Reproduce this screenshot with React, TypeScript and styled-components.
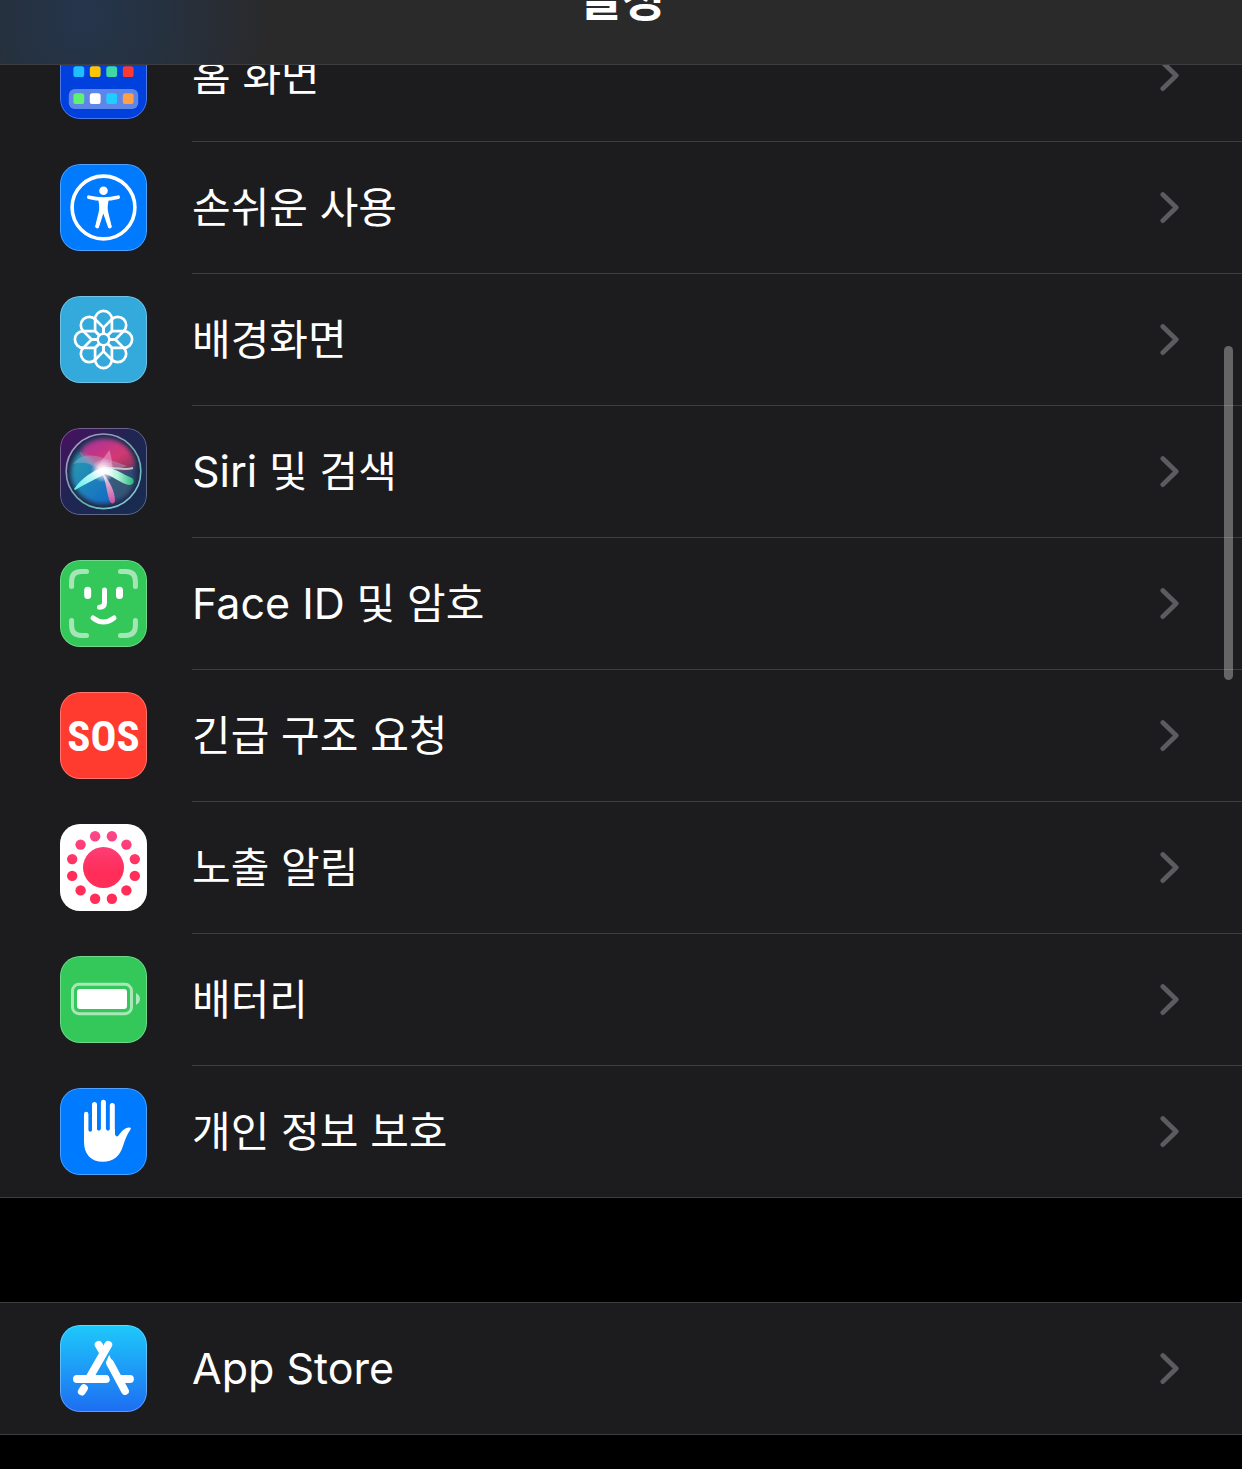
import React from "react";
import styled, { createGlobalStyle } from "styled-components";

const GlobalStyle = createGlobalStyle`
  *, *::before, *::after { box-sizing: border-box; }
  body {
    margin: 0;
    background: #000;
    color: #fff;
    font-family: Inter, "Noto Sans CJK KR", sans-serif;
  }
`;

const Screen = styled.div`
  min-height: 100vh;
  overflow: hidden;
  background: #000;
`;

const NavBar = styled.header`
  position: relative;
  z-index: 2;
  display: flex;
  align-items: center;
  justify-content: center;
  height: 132px;
  margin-top: -67px;
  border-bottom: 1px solid #3d3d40;
  background:
    radial-gradient(ellipse 180px 200px at 85px 85px, #25354c 0%, #26313f 45%, rgba(42, 42, 43, 0) 100%),
    #2a2a2b;
`;

const Title = styled.h1`
  margin: 0;
  font-size: 48px;
  line-height: 64px;
  font-weight: 700;
`;

const Main = styled.main`
  display: flex;
  flex-direction: column;
  gap: 104px;
  margin-top: -56px;
`;

const Group = styled.ul`
  margin: 0;
  padding: 0;
  list-style: none;
  background: #1c1c1e;
  border: solid #3d3d41;
  border-width: 1px 0;
`;

const RowLink = styled.a`
  display: flex;
  align-items: stretch;
  gap: 45px;
  padding-left: 60px;
  color: inherit;
  text-decoration: none;
`;

const IconTile = styled.span<{ $fill: string }>`
  position: relative;
  flex: none;
  align-self: flex-start;
  width: 87px;
  height: 87px;
  margin-top: 22px;
  border-radius: 20px;
  overflow: hidden;
  background: ${(p) => p.$fill};

  svg {
    display: block;
    width: 100%;
    height: 100%;
  }

  &::after {
    content: "";
    position: absolute;
    inset: 0;
    border: 1px solid rgba(255, 255, 255, 0.3);
    border-radius: inherit;
  }
`;

const RowBody = styled.span`
  display: flex;
  flex: 1;
  align-items: center;
  justify-content: space-between;
  min-height: 131px;
  padding-right: 62px;

  li:not(:last-child) > a > & {
    min-height: 132px;
    border-bottom: 1px solid #3d3d41;
  }
`;

const Label = styled.span`
  font-size: 42px;
  line-height: 60px;
`;

const Latin = styled.span`
  font-size: 43px;
`;

const SosText = styled.span`
  display: flex;
  align-items: center;
  justify-content: center;
  height: 100%;
  font-family: "Roboto Condensed", "Liberation Sans Narrow", "Open Sans Condensed", "Noto Sans Condensed", Roboto, sans-serif;
  font-size: 43px;
  line-height: 48px;
  font-weight: 700;
`;

const ScrollThumb = styled.div`
  position: fixed;
  z-index: 3;
  top: 346px;
  right: 9px;
  width: 9px;
  height: 334px;
  border-radius: 5px;
  background: rgba(255, 255, 255, 0.32);
`;

const Chevron = () => (
  <svg width="20" height="32" viewBox="0 0 20 32" fill="none" stroke="#5c5c60" strokeWidth="4.8" strokeLinecap="round" strokeLinejoin="round" aria-hidden="true">
    <path d="M2.8 2.6 16.200 15.500 2.800 28.600" />
  </svg>
);

const Glyph = ({ children }: { children: React.ReactNode }) => (
  <svg viewBox="0 0 87 87" fill="none" aria-hidden="true">{children}</svg>
);

const columns = [13.4, 29.8, 46.3, 62.8];

const HomeGlyph = () => (
  <Glyph>
    {["#ff9f46", "#5ef17c", "#fff", "#1ec8ff"].map((c, i) => (
      <rect key={c} x={columns[i]} y="14" width="10.8" height="10.8" rx="2.6" fill={c} />
    ))}
    {["#1ebeff", "#ffc400", "#3fd8a4", "#f93a33"].map((c, i) => (
      <rect key={c} x={columns[i]} y="34.2" width="10.8" height="10.8" rx="2.6" fill={c} />
    ))}
    <rect x="8.8" y="57" width="69.4" height="20" rx="6" fill="#fff" fillOpacity="0.37" />
    {["#5df272", "#fff", "#1fcdff", "#ff9f46"].map((c, i) => (
      <rect key={c} x={columns[i]} y="61.2" width="10.8" height="10.8" rx="2.6" fill={c} />
    ))}
  </Glyph>
);

const AccessibilityGlyph = () => (
  <Glyph>
    <circle cx="43.5" cy="43.5" r="31.4" stroke="#fff" strokeWidth="3.6" />
    <circle cx="43.5" cy="26.8" r="4.3" fill="#fff" />
    <path d="M28.8 33.2Q36 35 43.5 35T58.2 33.2" stroke="#fff" strokeWidth="3.6" strokeLinecap="round" />
    <path d="M38 34h11c-1 5-1.3 8-1.3 10 0 4 2.5 11 4 19l-3.4 1-5-14.500-4.600 14.500-3.500-1c1.500-8 4-15 4-19 0-2-.2-5-1.200-10z" fill="#fff" />
    <path d="M41.2 49 37 62.8M45.8 49 50 62.8" stroke="#fff" strokeWidth="3.2" strokeLinecap="round" />
  </Glyph>
);

const WallpaperGlyph = () => (
  <Glyph>
    <g transform="translate(43.5 43.5)" stroke="#fff" strokeWidth="2.7" strokeLinejoin="round">
      {[0, 45, 90, 135, 180, 225, 270, 315].map((a) => (
        <path key={a} transform={`rotate(${a})`} d="M-3.5-3.5-8.4-8.4V-20.2A8.4 8.4 0 0 1 8.4-20.2V-8.4L3.5-3.5" />
      ))}
      <circle r="5.8" fill="#34aadc" strokeWidth="2.4" />
    </g>
  </Glyph>
);

const SiriGlyph = () => (
  <Glyph>
    <defs>
      <linearGradient id="siriBg" x1="0" y1="0" x2="1" y2="1">
        <stop offset="0" stopColor="#4a1060" />
        <stop offset="0.45" stopColor="#202552" />
        <stop offset="1" stopColor="#172c50" />
      </linearGradient>
      <radialGradient id="siriOrb">
        <stop offset="0" stopColor="#566a9a" />
        <stop offset="0.75" stopColor="#2b4a74" />
        <stop offset="1" stopColor="#1d2344" />
      </radialGradient>
      <linearGradient id="siriRim" x1="0" y1="0" x2="1" y2="1">
        <stop offset="0" stopColor="#c08ad0" />
        <stop offset="0.6" stopColor="#65b5a5" />
        <stop offset="1" stopColor="#8fd0e8" />
      </linearGradient>
      <linearGradient id="siriPink" x1="0" y1="0" x2="1" y2="1">
        <stop offset="0" stopColor="#a8309e" />
        <stop offset="0.6" stopColor="#d43a72" />
        <stop offset="1" stopColor="#7a3058" />
      </linearGradient>
      <linearGradient id="siriBlue" x1="0" y1="0" x2="1" y2="1">
        <stop offset="0" stopColor="#2a9cae" />
        <stop offset="1" stopColor="#1268c8" />
      </linearGradient>
      <linearGradient id="siriGreen" x1="0" y1="0" x2="1" y2="0">
        <stop offset="0" stopColor="#fff" />
        <stop offset="0.5" stopColor="#b5f5df" />
        <stop offset="1" stopColor="#25b77a" />
      </linearGradient>
      <linearGradient id="siriCyan" x1="1" y1="0" x2="0" y2="1">
        <stop offset="0" stopColor="#fff" />
        <stop offset="1" stopColor="#58eee8" />
      </linearGradient>
      <linearGradient id="siriMagenta" x1="0" y1="0" x2="0" y2="1">
        <stop offset="0" stopColor="#fff" />
        <stop offset="1" stopColor="#f04a9c" />
      </linearGradient>
      <radialGradient id="siriGlow">
        <stop offset="0" stopColor="#fff" />
        <stop offset="0.35" stopColor="#fff" stopOpacity="0.75" />
        <stop offset="1" stopColor="#fff" stopOpacity="0" />
      </radialGradient>
      <filter id="siriSoft" x="-20%" y="-20%" width="140%" height="140%">
        <feGaussianBlur stdDeviation="2" />
      </filter>
      <filter id="siriEdge" x="-20%" y="-20%" width="140%" height="140%">
        <feGaussianBlur stdDeviation="0.5" />
      </filter>
    </defs>
    <rect width="87" height="87" fill="url(#siriBg)" />
    <circle cx="43.5" cy="43.3" r="37.3" fill="url(#siriOrb)" stroke="url(#siriRim)" strokeWidth="1.6" />
    <g filter="url(#siriSoft)">
      <path d="M22 21C32 8 58 8 68 21 75 29 76 37 73 40 62 45 51 39 42 43 31 38 22 32 22 21Z" fill="url(#siriPink)" />
      <path d="M19 25C10 35 9 51 16 60 24 74 43 79 55 72 49 62 49 48 42 43 33 33 26 28 19 25Z" fill="url(#siriBlue)" />
      <path d="M42 43C53 47 65 55 74 49 74 60 66 70 57 72 49 65 49 53 42 43Z" fill="#3a5878" fillOpacity="0.8" />
    </g>
    <g filter="url(#siriEdge)">
      <path d="M13 36C24 22 38 27 67 38 56 43 48 39 42 43 34 36 23 33 13 36Z" fill="#a6b9d8" fillOpacity="0.38" />
      <path d="M49.5 22C44 29 38 38 29 49L43 45 52 42C53 35 51 28 49.5 22Z" fill="#ef9fd4" fillOpacity="0.55" />
      <path d="M20 24C26 34 35 40 43 44" stroke="#db70bd" strokeOpacity="0.5" />
      <path d="M14 61C22 50 33 42 45 39L45 46C35 51 24 57 15 62Z" fill="url(#siriCyan)" />
      <path d="M41 40C53 38 62 46 72 50 75 52 74 57 69 57 61 56 53 47 41 45Z" fill="url(#siriGreen)" />
      <path d="M40 42C49 51 55 63 55 73 54 77 50 76 49 71 46 61 46 51 40 42Z" fill="url(#siriMagenta)" fillOpacity="0.85" />
      <path d="M43 41C53 38 62 43 73 40" stroke="#d2f2e6" strokeOpacity="0.75" strokeWidth="2" />
    </g>
    <circle cx="43" cy="42.5" r="12" fill="url(#siriGlow)" />
  </Glyph>
);

const FaceGlyph = () => (
  <Glyph>
    <g stroke="#fff" strokeWidth="5" strokeLinecap="round" strokeLinejoin="round">
      <path strokeOpacity="0.56" d="M26.5 11.6H21.5Q11.6 11.6 11.6 21.5V26.5M60.5 11.6H65.5Q75.4 11.6 75.4 21.5V26.5M11.6 60.5V65.5Q11.6 75.4 21.5 75.4H26.5M75.4 60.5V65.5Q75.4 75.4 65.5 75.4H60.5" />
      <path d="M44.5 30V42.5Q44.5 47.3 39.5 47.3" />
      <path d="M33 58Q43.5 66 54 58" />
      <path strokeWidth="7" d="M27.7 30.3V35.5M59.5 30.3V35.5" />
    </g>
  </Glyph>
);

const ExposureGlyph = () => (
  <Glyph>
    <defs>
      <linearGradient id="exposure" gradientUnits="userSpaceOnUse" x1="0" y1="6" x2="0" y2="48">
        <stop offset="0" stopColor="#fb4a8c" />
        <stop offset="1" stopColor="#ff2d58" />
      </linearGradient>
    </defs>
    <g fill="url(#exposure)">
      <circle cx="43.5" cy="43.5" r="20.5" />
      {Array.from({ length: 12 }, (_, i) => {
        const a = ((15 + i * 30) * Math.PI) / 180;
        return <circle key={i} cx={43.5 + 32.4 * Math.cos(a)} cy={43.5 + 32.4 * Math.sin(a)} r="5.2" />;
      })}
    </g>
  </Glyph>
);

const BatteryGlyph = () => (
  <Glyph>
    <rect x="12.5" y="28.3" width="59" height="29.4" rx="6.5" stroke="#fff" strokeOpacity="0.58" strokeWidth="3" />
    <rect x="17" y="33" width="50" height="20" rx="3" fill="#fff" />
    <path d="M76 37C81.3 39.5 81.3 46.5 76 49Z" fill="#fff" fillOpacity="0.6" />
  </Glyph>
);

const HandGlyph = () => (
  <Glyph>
    <g stroke="#fff" strokeLinecap="round">
      <path strokeWidth="4.4" d="M26.2 26V52" />
      <path strokeWidth="5" d="M34.5 16.5V52M43.4 14.3V52M52.3 17.5V52" />
    </g>
    <path d="M24 40 28.4 42.5Q30.2 45 32 42.5L37 41.5Q39 44 40.9 41L45.9 41Q47.8 44 49.8 41.5L54.8 41V46Q56 50 58.5 47.5C61 44 65 38.8 70 39.5Q71.5 40 70.5 41.5C67 46 65 52 63 58 60 68 53 73.8 43 73.8 31 73.8 24 66 24 54Z" fill="#fff" />
  </Glyph>
);

const AppStoreGlyph = () => (
  <Glyph>
    <g stroke="#fff" strokeWidth="7.8" strokeLinecap="round" strokeLinejoin="round">
      <path d="M48.3 19.8 29 53.5" />
      <path d="M38.6 19.8 42 25.6" />
      <path d="M16.9 54H46" />
      <path d="M60 54H70" />
      <path d="M50 38 65 66" />
      <path d="M24 63.2 21.8 66.6" />
    </g>
    <path d="M49.3 30C45.5 36 46.5 40 48.5 43L55 43Z" fill="#fff" />
    <path d="M46.5 44.500C49 50 50.500 54 53 59" stroke="#218cf6" strokeWidth="1.5" />
  </Glyph>
);

interface Setting {
  label: string;
  fill: string;
  icon: React.ReactNode;
}

const groups: Setting[][] = [
  [
    { label: "홈 화면", fill: "#0040dd", icon: <HomeGlyph /> },
    { label: "손쉬운 사용", fill: "#007aff", icon: <AccessibilityGlyph /> },
    { label: "배경화면", fill: "#34aadc", icon: <WallpaperGlyph /> },
    { label: "Siri 및 검색", fill: "#202552", icon: <SiriGlyph /> },
    { label: "Face ID 및 암호", fill: "#34c759", icon: <FaceGlyph /> },
    { label: "긴급 구조 요청", fill: "#ff3b30", icon: <SosText aria-hidden="true">SOS</SosText> },
    { label: "노출 알림", fill: "#fff", icon: <ExposureGlyph /> },
    { label: "배터리", fill: "#34c759", icon: <BatteryGlyph /> },
    { label: "개인 정보 보호", fill: "#007aff", icon: <HandGlyph /> },
  ],
  [{ label: "App Store", fill: "linear-gradient(#1ec9fb, #1d6df2)", icon: <AppStoreGlyph /> }],
];

const SettingRow = ({ label, fill, icon }: Setting) => {
  // Latin words are set slightly larger than the Hangul beside them.
  const latin = label.match(/^[A-Za-z ]*[A-Za-z]/)?.[0] ?? "";
  return (
    <li>
      <RowLink href="#">
        <IconTile $fill={fill}>{icon}</IconTile>
        <RowBody>
          <Label>
            {latin && <Latin>{latin}</Latin>}
            {label.slice(latin.length)}
          </Label>
          <Chevron />
        </RowBody>
      </RowLink>
    </li>
  );
};

export default function App() {
  return (
    <Screen lang="ko">
      <GlobalStyle />
      <NavBar>
        <Title>설정</Title>
      </NavBar>
      <Main>
        {groups.map((group, i) => (
          <Group key={i}>
            {group.map((item) => (
              <SettingRow key={item.label} {...item} />
            ))}
          </Group>
        ))}
      </Main>
      <ScrollThumb />
    </Screen>
  );
}
